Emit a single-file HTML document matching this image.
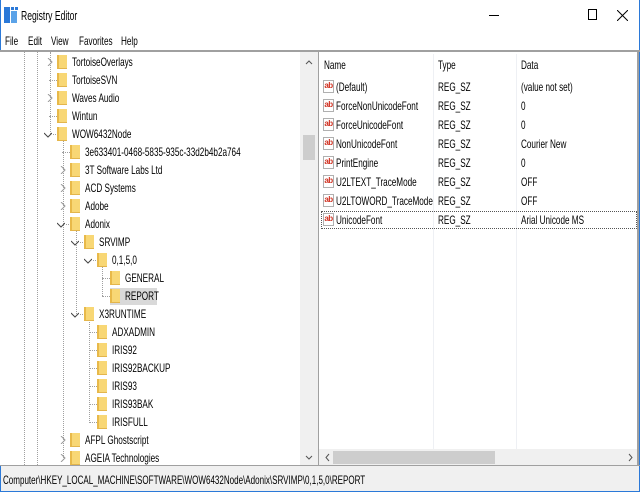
<!DOCTYPE html>
<html><head><meta charset="utf-8"><style>
*{margin:0;padding:0;box-sizing:border-box}
body{width:640px;height:492px;background:#fff;position:relative;overflow:hidden;font-family:"Liberation Sans",sans-serif;font-size:12px;color:#000}
.a{position:absolute}
.t{position:absolute;white-space:nowrap;transform:scaleX(.68);transform-origin:0 50%;line-height:14px}
.f{position:absolute;width:10px;height:14px;background:#f8d775;border-left:2px solid #e8b94a;border-bottom:1px solid #e3b54c}
.dv{position:absolute;width:0;border-left:1px dotted #a0a0a0}
.dh{position:absolute;height:0;border-top:1px dotted #a0a0a0;width:8px}
.ch{position:absolute;width:8px;height:8px}
.ab{position:absolute;width:11px;height:13px;border:1px solid #b0b0b0;background:#fff;color:#d03020;font-size:8px;font-weight:bold;line-height:10px;text-align:center;letter-spacing:-.5px}
</style></head><body>
<div class="a" style="left:0;top:0;width:640px;height:492px;border:1px solid #2b79d8;border-top:none"></div>
<svg class="a" style="left:4px;top:7px" width="14" height="16"><rect x="0" y="0" width="6" height="16" fill="#2b79d8"/><rect x="7" y="4" width="6" height="12" fill="#5ba3e8"/><rect x="7" y="0" width="3" height="3" fill="#2b79d8"/><rect x="11" y="0" width="3" height="3" fill="#2b79d8"/></svg>
<div class="t" style="left:21px;top:9px;font-size:13px;transform:scaleX(.66)">Registry Editor</div>
<div class="a" style="left:489px;top:15px;width:10px;height:1px;background:#000"></div>
<div class="a" style="left:588px;top:9px;width:9px;height:11px;border:1px solid #000"></div>
<svg class="a" style="left:617px;top:10px" width="11" height="11"><path d="M0 0L11 11M11 0L0 11" stroke="#000" stroke-width="1"/></svg>
<div class="t" style="left:5px;top:34px">File</div>
<div class="t" style="left:28px;top:34px">Edit</div>
<div class="t" style="left:51px;top:34px">View</div>
<div class="t" style="left:79px;top:34px">Favorites</div>
<div class="t" style="left:121px;top:34px">Help</div>
<div class="a" style="left:0;top:50px;width:640px;height:2px;background:#a0a0a0"></div>
<!-- left pane -->
<div class="a" style="left:0;top:52px;width:300px;height:413px;background:#fff"></div>
<div class="a" style="left:300px;top:52px;width:19px;height:413px;background:#f0f0f0"></div>
<div class="a" style="left:303px;top:135px;width:12px;height:25px;background:#cdcdcd"></div>
<svg class="a" style="left:305px;top:59px" width="8" height="6"><path d="M1 5L4 2L7 5" stroke="#555" fill="none"/></svg>
<svg class="a" style="left:305px;top:455px" width="8" height="6"><path d="M1 1L4 4L7 1" stroke="#555" fill="none"/></svg>
<div class="a" style="left:110px;top:288px;width:47px;height:17px;background:#d9d9d9"></div>
<div class="dv" style="left:24px;top:52px;height:413px"></div>
<div class="dv" style="left:37px;top:52px;height:413px"></div>
<div class="dv" style="left:50px;top:52px;height:82px"></div>
<div class="dv" style="left:63px;top:140px;height:320px"></div>
<div class="dv" style="left:76px;top:230px;height:84px"></div>
<div class="dv" style="left:89px;top:320px;height:103px"></div>
<div class="dv" style="left:102px;top:266px;height:30px"></div>
<div id="tree"></div>
<!-- right pane -->
<div class="a" style="left:318px;top:52px;width:1px;height:413px;background:#a0a0a0"></div>
<div class="a" style="left:433px;top:54px;width:1px;height:395px;background:#eef0f4"></div>
<div class="a" style="left:516px;top:54px;width:1px;height:395px;background:#eef0f4"></div>
<div class="t" style="left:324px;top:58px">Name</div>
<div class="t" style="left:438px;top:58px">Type</div>
<div class="t" style="left:521px;top:58px">Data</div>
<div id="vals"></div>
<div class="a" style="left:321px;top:211px;width:316px;height:18px;border:1px dotted #555"></div>
<div class="a" style="left:319px;top:449px;width:318px;height:16px;background:#f0f0f0"></div>
<div class="a" style="left:333px;top:451px;width:162px;height:13px;background:#cdcdcd"></div>
<svg class="a" style="left:324px;top:453px" width="6" height="9"><path d="M5 1L2 4.5L5 8" stroke="#555" fill="none"/></svg>
<svg class="a" style="left:628px;top:453px" width="6" height="9"><path d="M1 1L4 4.5L1 8" stroke="#555" fill="none"/></svg>
<div class="a" style="left:637px;top:52px;width:2px;height:414px;background:#a0a0a0"></div>
<!-- status -->
<div class="a" style="left:0;top:465px;width:640px;height:1px;background:#a0a0a0"></div>
<div class="a" style="left:1px;top:466px;width:638px;height:25px;background:#f0f0f0"></div>
<div class="t" style="left:3px;top:473px;transform:scaleX(.67)">Computer\HKEY_LOCAL_MACHINE\SOFTWARE\WOW6432Node\Adonix\SRVIMP\0,1,5,0\REPORT</div>
<script>
var T=[["TortoiseOverlays",0,">"],["TortoiseSVN",0,""],["Waves Audio",0,">"],["Wintun",0,""],["WOW6432Node",0,"v"],["3e633401-0468-5835-935c-33d2b4b2a764",1,""],["3T Software Labs Ltd",1,">"],["ACD Systems",1,">"],["Adobe",1,">"],["Adonix",1,"v"],["SRVIMP",2,"v"],["0,1,5,0",3,"v"],["GENERAL",4,""],["REPORT",4,""],["X3RUNTIME",2,"v"],["ADXADMIN",3,""],["IRIS92",3,""],["IRIS92BACKUP",3,""],["IRIS93",3,""],["IRIS93BAK",3,""],["IRISFULL",3,""],["AFPL Ghostscript",1,">"],["AGEIA Technologies",1,">"]];
var h="";T.forEach(function(r,i){var y=62+i*18,fx=Math.round(57+r[1]*13.3);
h+='<div class="f" style="left:'+fx+'px;top:'+(y-7)+'px"></div>';
h+='<div class="t" style="left:'+(fx+15)+'px;top:'+(y-7)+'px">'+r[0]+'</div>';
if(r[2]==">")h+='<svg class="ch" style="left:'+(fx-11)+'px;top:'+(y-4)+'px"><path d="M2 0L6 4L2 8" stroke="#9a9a9a" fill="none"/></svg>';
else if(r[2]=="v")h+='<svg class="ch" style="left:'+(fx-13)+'px;top:'+(y-3)+'px"><path d="M0 2L4 6L8 2" stroke="#444" fill="none"/></svg><div class="dh" style="left:'+(fx-4)+'px;top:'+y+'px;width:3px"></div>';
else h+='<div class="dh" style="left:'+(fx-8)+'px;top:'+y+'px"></div>';});
document.getElementById("tree").innerHTML=h;
var V=[["(Default)","(value not set)"],["ForceNonUnicodeFont","0"],["ForceUnicodeFont","0"],["NonUnicodeFont","Courier New"],["PrintEngine","0"],["U2LTEXT_TraceMode","OFF"],["U2LTOWORD_TraceMode","OFF"],["UnicodeFont","Arial Unicode MS"]];
h="";V.forEach(function(r,i){var y=87+i*19;
h+='<div class="ab" style="left:323px;top:'+(y-7)+'px">ab</div>';
h+='<div class="t" style="left:336px;top:'+(y-7)+'px">'+r[0]+'</div>';
h+='<div class="t" style="left:438px;top:'+(y-7)+'px">REG_SZ</div>';
h+='<div class="t" style="left:521px;top:'+(y-7)+'px">'+r[1]+'</div>';});
document.getElementById("vals").innerHTML=h;
</script>
</body></html>
